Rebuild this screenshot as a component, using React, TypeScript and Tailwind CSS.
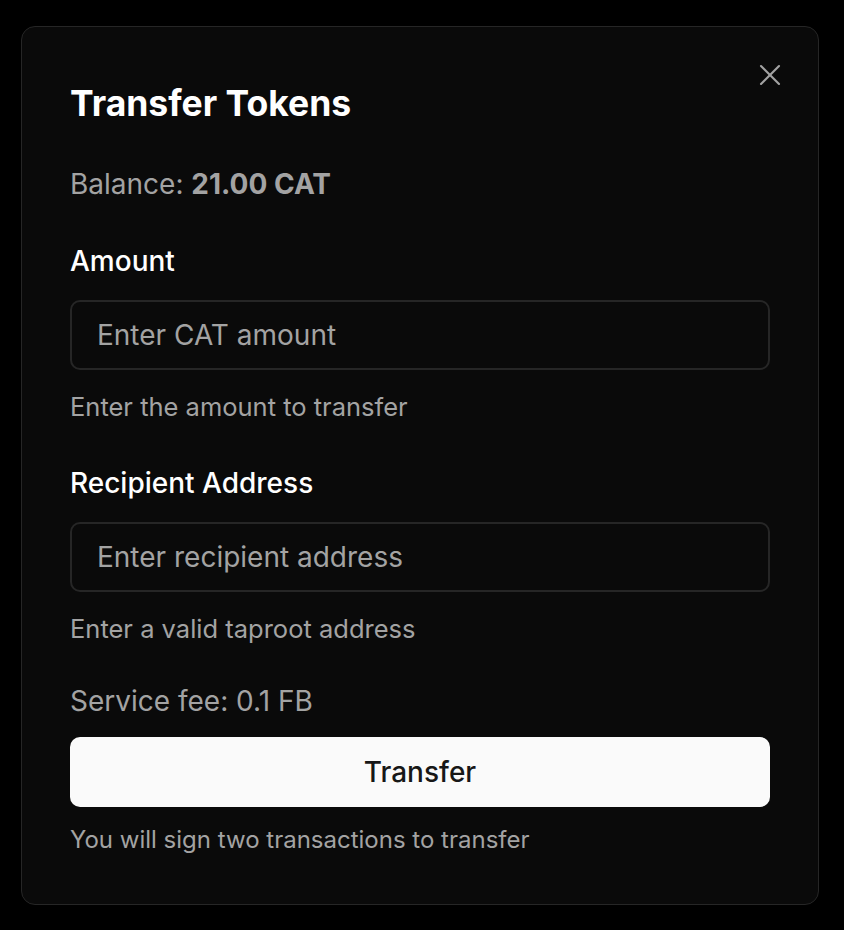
import { X } from 'lucide-react';

export default function App() {
  return (
    <div className="min-h-[930px] w-full bg-black pt-[26px] px-[21px]" style={{ fontFamily: 'Inter, "Noto Sans", sans-serif' }}>
      <div className="relative w-[798px] rounded-[14px] border border-[#262626] bg-[#0a0a0a] px-[48px] pt-[57px] pb-[49px]">
        <button className="absolute right-[30px] top-[30px] text-[#a3a3a3]">
          <X size={36} strokeWidth={1.4} />
        </button>

        <h2 className="text-[35.5px] leading-[40px] font-bold text-white">Transfer Tokens</h2>

        <p className="mt-[44px] text-[28px] leading-[32px] text-[#a3a3a3]">
          Balance: <span className="font-bold">21.00 CAT</span>
        </p>

        <label className="mt-[45px] block text-[28px] leading-[32px] font-medium text-white">Amount</label>
        <input
          placeholder="Enter CAT amount"
          className="mt-[23px] block h-[70px] w-full rounded-[10px] border-2 border-[#262626] bg-transparent px-[25px] text-[28px] text-white placeholder:text-[#a3a3a3] outline-none"
        />
        <p className="mt-[22px] text-[25.5px] leading-[30px] text-[#a3a3a3]">Enter the amount to transfer</p>

        <label className="mt-[45px] block text-[28px] leading-[32px] font-medium text-white">Recipient Address</label>
        <input
          placeholder="Enter recipient address"
          className="mt-[23px] block h-[70px] w-full rounded-[10px] border-2 border-[#262626] bg-transparent px-[25px] text-[28px] text-white placeholder:text-[#a3a3a3] outline-none"
        />
        <p className="mt-[22px] text-[25.5px] leading-[30px] text-[#a3a3a3]">Enter a valid taproot address</p>

        <p className="mt-[41px] text-[28px] leading-[32px] text-[#a3a3a3]">Service fee: 0.1 FB</p>

        <button className="mt-[20px] flex h-[70px] w-full items-center justify-center rounded-[10px] bg-[#fafafa] text-[28px] font-medium text-[#171717]">
          Transfer
        </button>

        <p className="mt-[18px] text-[24px] leading-[30px] text-[#a3a3a3]">You will sign two transactions to transfer</p>
      </div>
    </div>
  );
}
